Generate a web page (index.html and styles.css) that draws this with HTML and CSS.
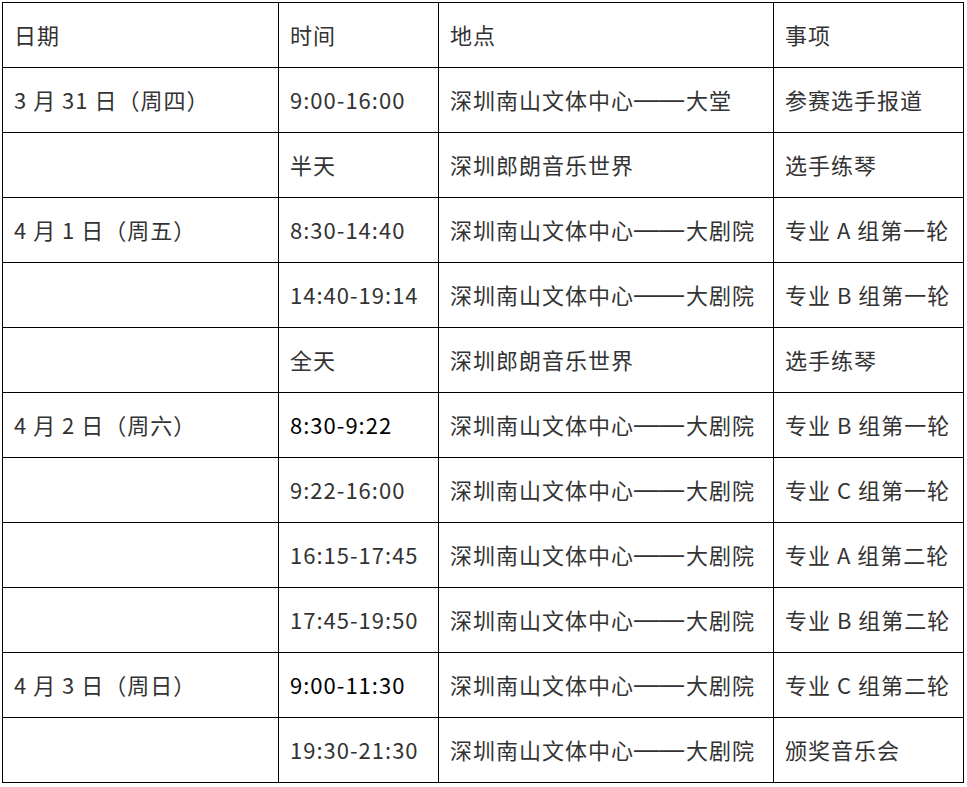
FILE: index.html
```html
<!DOCTYPE html>
<html lang="zh-CN">
<head>
<meta charset="utf-8">
<link rel="stylesheet" href="styles.css">
</head>
<body>
<table class="schedule">
  <colgroup>
    <col class="c-date"><col class="c-time"><col class="c-place"><col class="c-item">
  </colgroup>
  <tr><td>日期</td><td>时间</td><td>地点</td><td>事项</td></tr>
  <tr><td>3 月 31 日（周四）</td><td>9:00-16:00</td><td>深圳南山文体中心<span class="dash">——</span>大堂</td><td>参赛选手报道</td></tr>
  <tr><td></td><td>半天</td><td>深圳郎朗音乐世界</td><td>选手练琴</td></tr>
  <tr><td>4 月 1 日（周五）</td><td>8:30-14:40</td><td>深圳南山文体中心<span class="dash">——</span>大剧院</td><td>专业 A 组第一轮</td></tr>
  <tr><td></td><td>14:40-19:14</td><td>深圳南山文体中心<span class="dash">——</span>大剧院</td><td>专业 B 组第一轮</td></tr>
  <tr><td></td><td>全天</td><td>深圳郎朗音乐世界</td><td>选手练琴</td></tr>
  <tr><td>4 月 2 日（周六）</td><td class="dark">8:30-9:22</td><td>深圳南山文体中心<span class="dash">——</span>大剧院</td><td>专业 B 组第一轮</td></tr>
  <tr><td></td><td>9:22-16:00</td><td>深圳南山文体中心<span class="dash">——</span>大剧院</td><td>专业 C 组第一轮</td></tr>
  <tr><td></td><td>16:15-17:45</td><td>深圳南山文体中心<span class="dash">——</span>大剧院</td><td>专业 A 组第二轮</td></tr>
  <tr><td></td><td>17:45-19:50</td><td>深圳南山文体中心<span class="dash">——</span>大剧院</td><td>专业 B 组第二轮</td></tr>
  <tr><td>4 月 3 日（周日）</td><td class="dark">9:00-11:30</td><td>深圳南山文体中心<span class="dash">——</span>大剧院</td><td>专业 C 组第二轮</td></tr>
  <tr><td></td><td>19:30-21:30</td><td>深圳南山文体中心<span class="dash">——</span>大剧院</td><td>颁奖音乐会</td></tr>
</table>
</body>
</html>
```
FILE: styles.css
```css
html, body {
  margin: 0;
  background: #fff;
}
body {
  padding: 2px 0 0 2px;
  font-family: "Noto Sans CJK SC", "Noto Sans", sans-serif;
}
.schedule {
  border-collapse: collapse;
  table-layout: fixed;
  width: 961px;
  color: #333;
  font-size: 22px;
  letter-spacing: 1px;
}
.c-date { width: 276px; }
.c-time { width: 160px; }
.c-place { width: 335px; }
.c-item { width: 190px; }
.schedule tr {
  height: 65px;
}
.schedule td {
  border: 1px solid #000;
  padding: 0 0 3px 11px;
  vertical-align: middle;
  white-space: nowrap;
  line-height: 30px;
}
.schedule td.dark {
  color: #000;
}
.dash {
  font-family: "Liberation Sans", sans-serif;
  font-size: 25px;
  line-height: 1;
  letter-spacing: 0;
  padding-right: 2px;
  vertical-align: 1px;
}
```
